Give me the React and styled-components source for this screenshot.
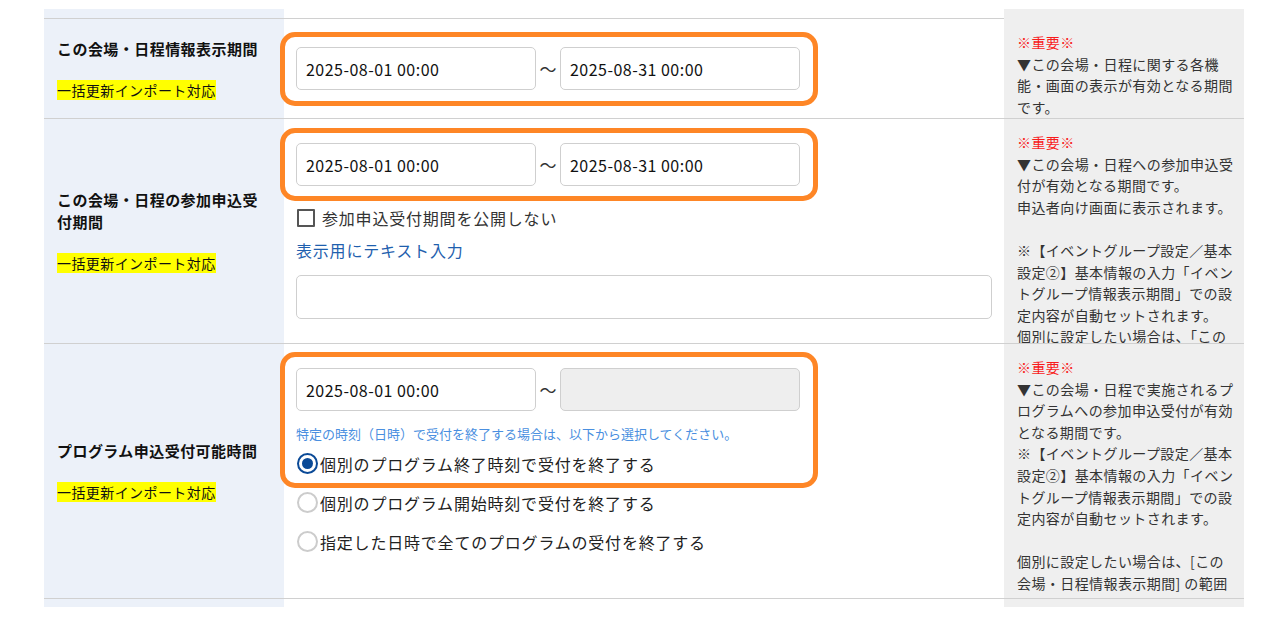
import React from 'react';
import styled, { createGlobalStyle } from 'styled-components';

const GlobalStyle = createGlobalStyle`
    body {
        margin: 0;
        background: #fff;
        font-family: "Noto Sans CJK JP", "Noto Sans", sans-serif;
        color: #222;
    }
`;

const ORANGE = '#fe8626';

const Table = styled.div`
    width: 1200px;
    margin-left: 44px;
    padding-top: 9px;
`;

const Row = styled.div`
    display: flex;
    height: ${(p) => p.$h}px;
    box-sizing: border-box;
    border-bottom: ${(p) => (p.$last ? 'none' : '1px solid #d0d0d0')};
`;

const Head = styled.div`
    width: 240px;
    flex-shrink: 0;
    box-sizing: border-box;
    padding: 0 13px;
    background: #ecf1f9;
    display: flex;
    flex-direction: column;
    justify-content: center;
    align-items: flex-start;
`;

const Title = styled.div`
    font-size: 15px;
    font-weight: 700;
    line-height: 22px;
    letter-spacing: 0.03em;
    color: #111;
`;

const Tag = styled.span`
    margin-top: 20px;
    background: #ffff00;
    font-size: 14px;
    line-height: 20px;
    letter-spacing: 0.03em;
    color: #111;
`;

const Body = styled.div`
    width: 720px;
    flex-shrink: 0;
    box-sizing: border-box;
    padding: ${(p) => p.$pt}px 12px 0;
    background: #fff;
    display: flex;
    flex-direction: column;
    align-items: flex-start;
`;

const Note = styled.div`
    width: 240px;
    flex-shrink: 0;
    box-sizing: border-box;
    padding: 13px 10px 0 13px;
    background: #efefef;
    overflow: hidden;
    font-size: 14px;
    line-height: 21.6px;
    letter-spacing: 0.03em;
    color: #333;
    white-space: pre;
`;

const Important = styled.div`
    color: #f81c1c;
`;

const Marked = styled.div`
    position: relative;
    display: flex;
    flex-direction: column;
    &::after {
        content: '';
        position: absolute;
        top: -${(p) => p.$top}px;
        bottom: -${(p) => p.$bottom}px;
        left: -16px;
        right: -18px;
        border: 5px solid ${ORANGE};
        border-radius: 15px;
        pointer-events: none;
    }
`;

const Range = styled.div`
    display: flex;
    align-items: center;
`;

const DateBox = styled.div`
    width: 240px;
    height: 43px;
    box-sizing: border-box;
    border: 1px solid #cfcfcf;
    border-radius: 5px;
    background: ${(p) => (p.$disabled ? '#eeeeee' : '#fff')};
    padding: 0 9px;
    display: flex;
    align-items: center;
    font-size: 16px;
    letter-spacing: 0.03em;
    color: #111;
`;

const Tilde = styled.span`
    width: 24px;
    text-align: center;
    font-size: 17px;
    color: #333;
`;

const CheckRow = styled.label`
    margin-top: 20px;
    display: flex;
    align-items: center;
    height: 24px;
    font-size: 16px;
    letter-spacing: 0.05em;
    color: #333;
`;

const Box = styled.span`
    width: 18px;
    height: 18px;
    box-sizing: border-box;
    border: 2px solid #555;
    border-radius: 1px;
    margin: 0 7px 0 1px;
    background: #fff;
`;

const LinkLabel = styled.div`
    margin-top: 8px;
    line-height: 24px;
    font-size: 16px;
    letter-spacing: 0.05em;
    color: #1f5fae;
`;

const TextBox = styled.div`
    margin-top: 13px;
    width: 696px;
    height: 44px;
    box-sizing: border-box;
    border: 1px solid #cfcfcf;
    border-radius: 5px;
    background: #fff;
`;

const Help = styled.div`
    margin-top: 13px;
    line-height: 20px;
    font-size: 13px;
    color: #4a8fe0;
`;

const RadioRow = styled.label`
    display: flex;
    align-items: center;
    height: 39px;
    font-size: 16px;
    letter-spacing: 0.05em;
    color: #222;
`;

const Dot = styled.span`
    width: 21px;
    height: 21px;
    box-sizing: border-box;
    border-radius: 50%;
    border: ${(p) => (p.$on ? '2.5px solid #0b4a97' : '2px solid #cccccc')};
    background: #fff;
    margin: 0 2px 0 1px;
    display: flex;
    align-items: center;
    justify-content: center;
    &::after {
        content: '';
        width: 11px;
        height: 11px;
        border-radius: 50%;
        background: ${(p) => (p.$on ? '#0b4a97' : 'transparent')};
    }
`;

const Stub = () => (
    <>
        <Head />
        <Body $pt={0} />
        <Note />
    </>
);

const notes = {
    period: `▼この会場・日程に関する各機
能・画面の表示が有効となる期間
です。`,
    entry: `▼この会場・日程への参加申込受
付が有効となる期間です。
申込者向け画面に表示されます。

※【イベントグループ設定／基本
設定②】基本情報の入力「イベン
トグループ情報表示期間」での設
定内容が自動セットされます。
個別に設定したい場合は、「この`,
    program: `▼この会場・日程で実施されるプ
ログラムへの参加申込受付が有効
となる期間です。
※【イベントグループ設定／基本
設定②】基本情報の入力「イベン
トグループ情報表示期間」での設
定内容が自動セットされます。

個別に設定したい場合は、[この
会場・日程情報表示期間] の範囲`,
};

const radios = [
    '個別のプログラム開始時刻で受付を終了する',
    '指定した日時で全てのプログラムの受付を終了する',
];

const App = () => {
    return (
        <>
            <GlobalStyle />
            <Table>
                <Row $h={10}>
                    <Stub />
                </Row>

                <Row $h={100}>
                    <Head>
                        <Title>この会場・日程情報表示期間</Title>
                        <Tag>一括更新インポート対応</Tag>
                    </Head>
                    <Body $pt={28}>
                        <Marked $top={15} $bottom={16}>
                            <Range>
                                <DateBox>2025-08-01 00:00</DateBox>
                                <Tilde>〜</Tilde>
                                <DateBox>2025-08-31 00:00</DateBox>
                            </Range>
                        </Marked>
                    </Body>
                    <Note>
                        <Important>※重要※</Important>
                        {notes.period}
                    </Note>
                </Row>

                <Row $h={225}>
                    <Head>
                        <Title>この会場・日程の参加申込受付期間</Title>
                        <Tag>一括更新インポート対応</Tag>
                    </Head>
                    <Body $pt={24}>
                        <Marked $top={15} $bottom={15}>
                            <Range>
                                <DateBox>2025-08-01 00:00</DateBox>
                                <Tilde>〜</Tilde>
                                <DateBox>2025-08-31 00:00</DateBox>
                            </Range>
                        </Marked>
                        <CheckRow>
                            <Box />
                            参加申込受付期間を公開しない
                        </CheckRow>
                        <LinkLabel>表示用にテキスト入力</LinkLabel>
                        <TextBox />
                    </Body>
                    <Note>
                        <Important>※重要※</Important>
                        {notes.entry}
                    </Note>
                </Row>

                <Row $h={255}>
                    <Head>
                        <Title>プログラム申込受付可能時間</Title>
                        <Tag>一括更新インポート対応</Tag>
                    </Head>
                    <Body $pt={24}>
                        <Marked $top={16} $bottom={5}>
                            <Range>
                                <DateBox>2025-08-01 00:00</DateBox>
                                <Tilde>〜</Tilde>
                                <DateBox $disabled />
                            </Range>
                            <Help>特定の時刻（日時）で受付を終了する場合は、以下から選択してください。</Help>
                            <RadioRow>
                                <Dot $on />
                                個別のプログラム終了時刻で受付を終了する
                            </RadioRow>
                        </Marked>
                        {radios.map((r) => (
                            <RadioRow key={r}>
                                <Dot />
                                {r}
                            </RadioRow>
                        ))}
                    </Body>
                    <Note>
                        <Important>※重要※</Important>
                        {notes.program}
                    </Note>
                </Row>

                <Row $h={8} $last>
                    <Stub />
                </Row>
            </Table>
        </>
    );
};

export default App;
